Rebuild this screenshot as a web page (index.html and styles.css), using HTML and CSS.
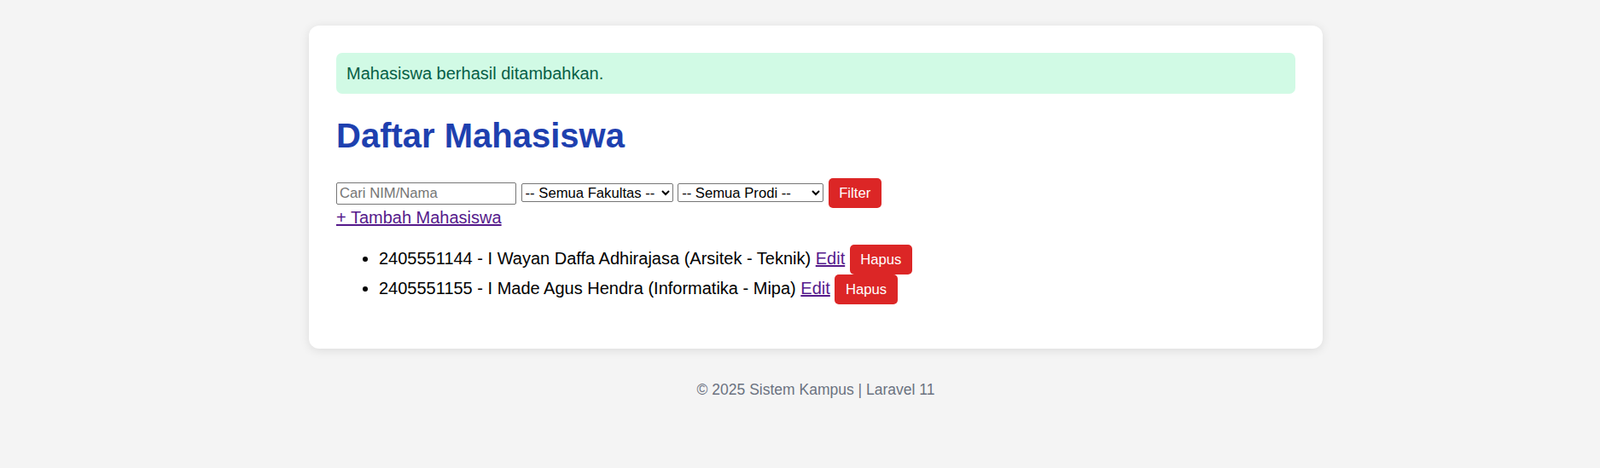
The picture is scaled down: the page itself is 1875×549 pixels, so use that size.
FILE: index.html
```html
<!DOCTYPE html>
<html lang="id">
<head>
<meta charset="utf-8">
<title>Daftar Mahasiswa</title>
<link rel="stylesheet" href="styles.css">
</head>
<body>
<div class="page">
  <main class="card">
    <div class="alert">Mahasiswa berhasil ditambahkan.</div>
    <h1 class="title">Daftar Mahasiswa</h1>
    <form class="filter-form">
      <input class="search" type="text" placeholder="Cari NIM/Nama">
      <select class="select select-fak">
        <option>-- Semua Fakultas --</option>
      </select>
      <select class="select select-prodi">
        <option>-- Semua Prodi --</option>
      </select>
      <button class="btn" type="button">Filter</button>
    </form>
    <a class="link" href="#">+ Tambah Mahasiswa</a>
    <ul class="list">
      <li class="item">2405551144 - I Wayan Daffa Adhirajasa (Arsitek - Teknik) <a class="link" href="#">Edit</a> <button class="btn" type="button">Hapus</button></li>
      <li class="item">2405551155 - I Made Agus Hendra (Informatika - Mipa) <a class="link" href="#">Edit</a> <button class="btn" type="button">Hapus</button></li>
    </ul>
  </main>
  <footer class="footer">© 2025 Sistem Kampus | Laravel 11</footer>
</div>
</body>
</html>
```

FILE: styles.css
```css
html, body {
  margin: 0;
  padding: 0;
}

body {
  background: #f4f4f4;
  font-family: "Liberation Sans", Arial, sans-serif;
  font-size: 20px;
  color: #000;
}

.page {
  padding: 30px 0 0 37px;
}

.card {
  display: block;
  box-sizing: border-box;
  width: 1188px;
  margin: 0 auto;
  background: #fff;
  border-radius: 12px;
  padding: 32px;
  box-shadow: 0 2px 12px rgba(0, 0, 0, 0.1);
}

.alert {
  background: #d1fae5;
  color: #065f46;
  padding: 12.5px 12px;
  border-radius: 7px;
}

.title {
  color: #1e40af;
  font-size: 40px;
  font-weight: bold;
  margin: 26.8px 0;
}

.filter-form {
  margin: 0;
  height: 35px;
}

.search {
  box-sizing: border-box;
  width: 211px;
  height: 26px;
  font-family: "Liberation Sans", Arial, sans-serif;
  font-size: 16.67px;
  border: 1px solid #767676;
  border-radius: 2px;
  padding: 1px 3px;
  margin: 0;
}

.search::placeholder {
  color: #757575;
}

.select {
  box-sizing: border-box;
  height: 22px;
  font-family: "Liberation Sans", Arial, sans-serif;
  font-size: 16.67px;
  color: #000;
  background: #fff;
  border: 1px solid #767676;
  border-radius: 2px;
  margin: 0;
}

.select-fak {
  width: 178px;
}

.select-prodi {
  width: 171px;
}

.btn {
  box-sizing: border-box;
  height: 35px;
  font-family: "Liberation Sans", Arial, sans-serif;
  font-size: 16.67px;
  line-height: 19px;
  color: #fff;
  background: #dc2626;
  border: none;
  border-radius: 5px;
  padding: 8px 12.5px;
  margin: 0;
  cursor: pointer;
}

.link {
  color: #551a8b;
  text-decoration: underline;
}

.list {
  margin: 20px 0;
  padding-left: 50px;
}

.item {
  height: 35px;
}

.footer {
  margin-top: 38px;
  text-align: center;
  font-size: 17.5px;
  color: #6b7280;
}
```
